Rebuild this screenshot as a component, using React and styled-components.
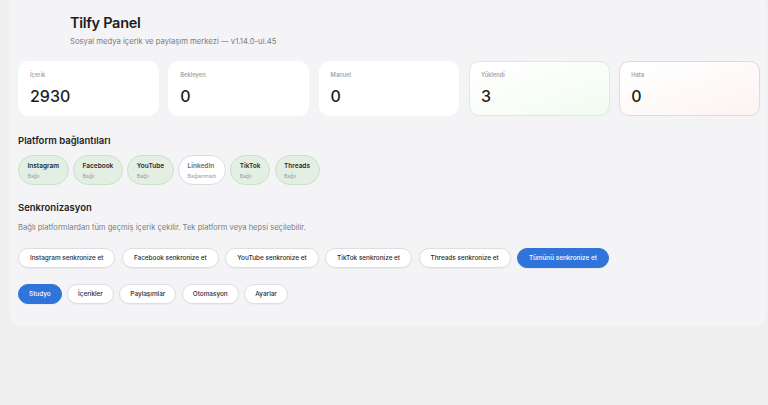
import styled, { createGlobalStyle } from "styled-components";

const GlobalStyle = createGlobalStyle`
    html, body {
        margin: 0;
        padding: 0;
        background: #efefef;
        font-family: Inter, "Noto Sans", sans-serif;
        color: #1d1d1f;
    }
`

const Page = styled.div`
    padding: 0 2px 0 10px;
    height: 405px;
    overflow: hidden;
`

const Panel = styled.main`
    margin-top: -6px;
    background: #f4f4f6;
    border-radius: 10px;
    padding: 6px 6px 22px 8px;
`

const Header = styled.header`
    padding: 14px 0 0 52px;
    height: 61px;
    box-sizing: border-box;
`

const Title = styled.h1`
    margin: 0;
    font-size: 14.5px;
    font-weight: 600;
    letter-spacing: -0.3px;
    line-height: 18px;
`

const Subtitle = styled.p`
    margin: 5px 0 0;
    font-size: 7.7px;
    color: #7a7a7f;
    line-height: 10px;
`

const Stats = styled.div`
    display: grid;
    grid-template-columns: repeat(5, 1fr);
    gap: 9.5px;
`

const tones = {
    plain: { bg: "#ffffff", border: "#ffffff" },
    ok: { bg: "linear-gradient(160deg, #ffffff 10%, #f1fbf1 100%)", border: "#d6edd7" },
    err: { bg: "linear-gradient(160deg, #ffffff 10%, #fdf3f3 100%)", border: "#f4d2d2" },
}

const StatCard = styled.div`
    height: 55px;
    box-sizing: border-box;
    border-radius: 10px;
    background: ${p => tones[p.$tone].bg};
    border: 1px solid ${p => tones[p.$tone].border};
    padding: 9px 11px;
`

const StatLabel = styled.div`
    font-size: 5.8px;
    color: #9a9a9f;
    font-weight: 500;
    line-height: 8px;
`

const StatValue = styled.div`
    margin-top: 7px;
    font-size: 16px;
    font-weight: 500;
    line-height: 20px;
`

const SectionTitle = styled.h2`
    margin: ${p => p.$top}px 0 0;
    font-size: 9.5px;
    font-weight: 600;
    line-height: 12px;
`

const PillRow = styled.div`
    display: flex;
    gap: 4.5px;
    margin-top: 8px;
`

const PlatformPill = styled.div`
    height: 30px;
    box-sizing: border-box;
    border-radius: 15px;
    padding: 6px 8.5px 0;
    background: ${p => (p.$on ? "#e3efe3" : "#ffffff")};
    border: 1px solid ${p => (p.$on ? "#c8e2c8" : "#dcdcdf")};
`

const PillName = styled.div`
    font-size: 6.5px;
    font-weight: 600;
    color: ${p => (p.$on ? "#2b2b2e" : "#6d6d72")};
    line-height: 9px;
`

const PillState = styled.div`
    font-size: 5.2px;
    color: #9d9da2;
    margin-top: 2px;
    line-height: 7px;
`

const Description = styled.p`
    margin: 9px 0 0;
    font-size: 7.6px;
    color: #7c7c81;
    line-height: 10px;
`

const ButtonRow = styled.div`
    display: flex;
    gap: ${p => p.$gap}px;
    margin-top: ${p => p.$top}px;
`

const Button = styled.button`
    height: 20px;
    border-radius: 10px;
    padding: 0 ${p => p.$pad}px;
    font-family: inherit;
    font-size: 6.4px;
    font-weight: 500;
    border: 1px solid ${p => (p.$primary ? "#2f74db" : "#dedee2")};
    background: ${p => (p.$primary ? "#2f74db" : "#ffffff")};
    color: ${p => (p.$primary ? "#ffffff" : "#2a2a2e")};
    box-shadow: 0 1px 1px rgba(0, 0, 0, 0.04);
`

const stats = [
    { label: "İçerik", value: "2930", tone: "plain" },
    { label: "Bekleyen", value: "0", tone: "plain" },
    { label: "Manuel", value: "0", tone: "plain" },
    { label: "Yüklendi", value: "3", tone: "ok" },
    { label: "Hata", value: "0", tone: "err" },
]

const platforms = [
    { name: "Instagram", on: true },
    { name: "Facebook", on: true },
    { name: "YouTube", on: true },
    { name: "LinkedIn", on: false },
    { name: "TikTok", on: true },
    { name: "Threads", on: true },
]

const syncTargets = ["Instagram", "Facebook", "YouTube", "TikTok", "Threads"]
const navItems = ["Studyo", "İçerikler", "Paylaşımlar", "Otomasyon", "Ayarlar"]

export default function App() {
    return (
        <>
            <GlobalStyle />
            <Page>
                <Panel>
                    <Header>
                        <Title>Tilfy Panel</Title>
                        <Subtitle>Sosyal medya içerik ve paylaşım merkezi — v1.14.0-ui.45</Subtitle>
                    </Header>
                    <Stats>
                        {stats.map(s => (
                            <StatCard key={s.label} $tone={s.tone}>
                                <StatLabel>{s.label}</StatLabel>
                                <StatValue>{s.value}</StatValue>
                            </StatCard>
                        ))}
                    </Stats>

                    <SectionTitle $top={19}>Platform bağlantıları</SectionTitle>
                    <PillRow>
                        {platforms.map(p => (
                            <PlatformPill key={p.name} $on={p.on}>
                                <PillName $on={p.on}>{p.name}</PillName>
                                <PillState>{p.on ? "Bağlı" : "Bağlanmadı"}</PillState>
                            </PlatformPill>
                        ))}
                    </PillRow>

                    <SectionTitle $top={17}>Senkronizasyon</SectionTitle>
                    <Description>Bağlı platformlardan tüm geçmiş içerik çekilir. Tek platform veya hepsi seçilebilir.</Description>
                    <ButtonRow $gap={6.5} $top={15}>
                        {syncTargets.map(t => (
                            <Button key={t} $pad={11}>{t} senkronize et</Button>
                        ))}
                        <Button $primary $pad={11}>Tümünü senkronize et</Button>
                    </ButtonRow>

                    <ButtonRow $gap={5.5} $top={16}>
                        {navItems.map((n, i) => (
                            <Button key={n} $primary={i === 0} $pad={10}>{n}</Button>
                        ))}
                    </ButtonRow>
                </Panel>
            </Page>
        </>
    )
}
